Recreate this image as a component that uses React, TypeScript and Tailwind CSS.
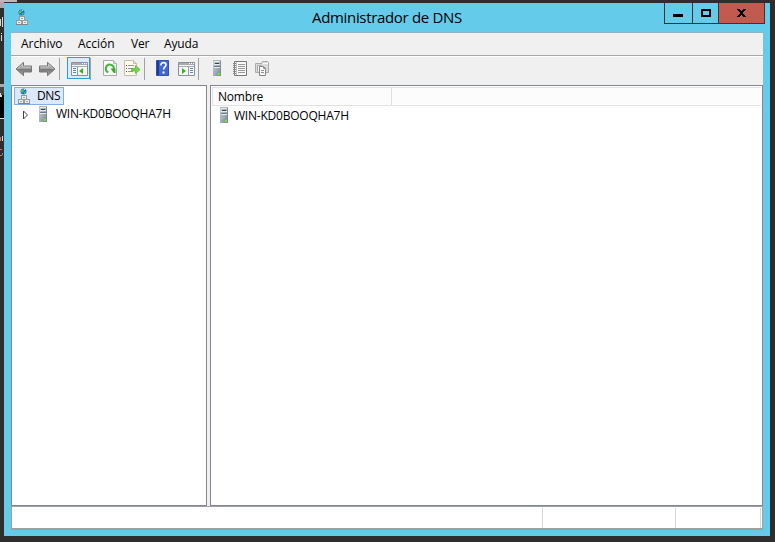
import React from 'react';

function DnsIcon() {
  return (
    <svg width="14" height="17" viewBox="0 0 14 17" shapeRendering="geometricPrecision">
      <circle cx="6.5" cy="3.5" r="3" fill="#2878bd" />
      <path d="M4 2.5 6 1l1 1-1 2-2 .5zM7 4l2 .5L7.500 6.300z" fill="#56c94c" />
      <path d="M7 1h1v1H7z" fill="#bdeef5" />
      <g fill="#eceeee" stroke="#959b9d">
        <rect x="4.500" y="7.500" width="5" height="4" />
        <rect x="1.500" y="11.500" width="5" height="4" />
        <rect x="7.500" y="11.500" width="5" height="4" />
      </g>
      <path d="M6 9h2v1H6zM3 13h2v1H3zM9 13h2v1H9z" fill="#9ca2a4" />
      <path d="M1 15.500h12" stroke="#7f8688" />
    </svg>
  );
}

function ServerIcon() {
  return (
    <svg width="10" height="16" viewBox="0 0 10 16">
      <defs>
        <linearGradient id="tower" x2="1" y2="1">
          <stop stopColor="#c9d2d5" />
          <stop offset=".5" stopColor="#a4b0b6" />
          <stop offset="1" stopColor="#758690" />
        </linearGradient>
      </defs>
      <path d="M1 0h8v16H1z" fill="url(#tower)" />
      <path d="M1 0h7v1H1z" fill="#a9b4b9" />
      <path d="M2 1h6v1H2zM2 4h6v1H2zM2 7h6v1H2z" fill="#e7edef" />
      <path d="M3 3h4v1H3z" fill="#34434b" />
      <path d="M2 6h6v1H2z" fill="#687a84" />
      <path d="M8 1h1v15H8z" fill="#7d8c95" />
      <path d="M6 13h2v2H6z" fill="#65ef20" />
    </svg>
  );
}

function Arrow({ right = false }: { right?: boolean }) {
  return (
    <svg width="18" height="16" viewBox="0 0 18 16" className={right ? '-scale-x-100' : ''}>
      <defs>
        <linearGradient id="arrow" x2="0" y2="1">
          <stop stopColor="#bbb" />
          <stop offset=".48" stopColor="#a0a0a0" />
          <stop offset=".5" stopColor="#777" />
          <stop offset="1" stopColor="#a5a5a5" />
        </linearGradient>
      </defs>
      <path d="M1 8 8.500 1.300V5H16.500v6H8.500v3.700z" fill="url(#arrow)" stroke="#777" strokeLinejoin="round" />
      <path d="M2.500 8 7.500 3.500V6h8" fill="none" stroke="#ccc" strokeWidth=".8" />
    </svg>
  );
}

function ConsoleIcon({ actions = false }: { actions?: boolean }) {
  return (
    <svg width="17" height="14" viewBox="0 0 17 14">
      <path d="M.5.5h16v13H.5z" fill="#f7f7f7" stroke="#8b9196" />
      <path d="M1 1h15v2H1z" fill="#a3abb0" />
      <path d="M11 1h1v1h-1zM13 1h1v1h-1zM15 1h1v1h-1z" fill="#fff" />
      <path d="M1 4.500h15" stroke="#a5acb0" />
      {actions ? (
        <>
          <path d="M10.500 5v8" stroke="#949a9f" />
          <path d="M12 6.500h3M12 8.500h3M12 10.500h3" stroke="#5389ba" />
          <path d="M4 6l4 3-4 3z" fill="#37b51c" />
        </>
      ) : (
        <>
          <path d="M6.500 5v8" stroke="#949a9f" />
          <path d="M2 6.500h3M2 8.500h3M2 10.500h3" stroke="#5389ba" />
          <path d="M12 6v6L8 9z" fill="#37b51c" />
        </>
      )}
    </svg>
  );
}

function RefreshIcon() {
  return (
    <svg width="14" height="16" viewBox="0 0 14 16">
      <path d="M.5.5h10l3 3v12H.5z" fill="#fafafa" stroke="#aaa" />
      <path d="M10.500.5v3h3" fill="#ddd" stroke="#b8b8b8" />
      <path d="M5.300 12.300A4 4 0 1 1 10.800 9" fill="none" stroke="#43b83a" strokeWidth="2.100" />
      <path d="M7.500 8.500H12.500v4.500H11L9.800 11.700z" fill="#38aa2e" />
    </svg>
  );
}

function ExportIcon() {
  return (
    <svg width="17" height="16" viewBox="0 0 17 16">
      <path d="M.5.5h9l3 3v12H.5z" fill="#fffbe8" stroke="#c1beb4" />
      <path d="M9.500.5v3h3" fill="#ded9c9" stroke="#c1beb4" />
      <path d="M2 5h1v1H2zM2 8h1v1H2zM2 11h1v1H2z" fill="#555" />
      <path d="M4 5.500h6M4 8.500h5M4 11.500h5" stroke="#9594ae" />
      <path d="M7.500 8.500h4v-3L16 9.500l-4.500 4v-2.500h-4z" fill="#73d34e" stroke="#55b83a" strokeWidth=".8" />
    </svg>
  );
}

function HelpIcon() {
  return (
    <svg width="14" height="16" viewBox="0 0 14 16">
      <path d="M.5.5h12v15H.5z" fill="#4268cc" stroke="#3553ad" />
      <path d="M1 1h2v14H1z" fill="#183b9e" />
      <path d="M5 5.500V4.500C5 2 10 2 10 4.800c0 2-2.200 2.100-2.500 4.700" fill="none" stroke="#fff" strokeWidth="1.600" />
      <path d="M6.500 11.500h2v2h-2z" fill="#fff" />
    </svg>
  );
}

function NotebookIcon() {
  return (
    <svg width="14" height="16" viewBox="0 0 14 16">
      <path d="M1.500.5h12v14h-12z" fill="#f8f8f8" stroke="#777" />
      <path d="M3.500 1v13" stroke="#bbb" />
      <path d="M5 3.500h7M5 5.500h7M5 7.500h7M5 9.500h7M5 11.500h7" stroke="#999" />
      <path d="M0 2.500h3M0 4.500h3M0 6.500h3M0 8.500h3M0 10.500h3M0 12.500h3" stroke="#888" />
    </svg>
  );
}

function CopyIcon() {
  return (
    <svg width="15" height="16" viewBox="0 0 15 16">
      <path d="M.5 2.500h6l1-2h5l1 1v10H.5z" fill="#dadada" stroke="#aaa" />
      <path d="M8 2h5v1H8z" fill="#fff" />
      <path d="M2.500 4.500h4v7h-4z" fill="#f2f2f2" stroke="#aaa" />
      <path d="M4.500 5.500h4l2 2v7h-6z" fill="#fafafa" stroke="#858585" />
      <path d="M8.500 5.500v2h2M6 9.500h3M6 11.500h3" fill="none" stroke="#909090" />
    </svg>
  );
}

function Separator({ className }: { className: string }) {
  return <div className={`h-[22px] w-px shrink-0 bg-[#a0a0a0] ${className}`} />;
}

function DesktopEdge() {
  return (
    <svg width="20" height="170" viewBox="0 0 20 170" className="absolute left-0 top-0" shapeRendering="crispEdges">
      <path d="M0 0h17v2H0z" fill="#b9b9b9" />
      <path d="M0 2h4v6H0z" fill="#aaa" />
      <path d="M0 19h1v7H0zM2 17h1v10H2zM1 33h1v1H1zM1 35h1v6H1z" fill="#d8d8d8" />
      <path d="M0 84h4v3H0z" fill="#aaa" />
      <path d="M0 87h4v8H0z" fill="#444" />
      <path d="M0 95h4v23H0z" fill="#000" />
      <path d="M0 93h1v2h1v2H0zM0 118h4v1H0z" fill="#ddd" />
      <path d="M0 137h1v4H0zM0 149h2v1H0zM0 155h2v1H0z" fill="#d2794c" />
      <path d="M2 136h1v5H2z" fill="#bceafa" />
      <path d="M2 153h1v2H2z" fill="#4387d7" />
    </svg>
  );
}

export default function App() {
  return (
    <main className="relative h-[542px] w-[775px] overflow-hidden bg-[#2e2e2e] pl-1 pt-[3px] font-['Open_Sans','Noto_Sans',sans-serif] text-xs leading-4 text-black">
      <DesktopEdge />
      <section className="relative flex h-[533px] w-[766px] flex-col bg-[#65cbea] px-[7px] pb-[6px]">
        <header className="flex h-[29px] shrink-0 items-start">
          <div className="ml-[4px] mt-[6px] w-[297px]"><DnsIcon /></div>
          <h1 className="mt-[4px] w-[340px] whitespace-nowrap text-[15px] leading-5 tracking-[-0.33px]">Administrador de DNS</h1>
          <div className="-mr-[2px] ml-auto flex h-[21px] w-[101px] shrink-0 border-x border-b border-[#353535]">
            <button aria-label="Minimizar" className="flex w-[28px] items-center justify-center border-r border-[#353535]"><span className="-ml-[2px] mt-[4px] h-[3px] w-[10px] bg-black" /></button>
            <button aria-label="Maximizar" className="flex w-[26px] items-center justify-center border-r border-[#353535]"><span className="h-2 w-[10px] border-2 border-black" /></button>
            <button aria-label="Cerrar" className="flex flex-1 items-center justify-center bg-[#c35a50]">
              <svg width="9" height="8" viewBox="0 0 9 8" shapeRendering="crispEdges"><path d="M0 0h3v1h1v1h1V1h1V0h3v1H8v1H7v1H6v2h1v1h1v1h1v1H6V7H5V6H4v1H3v1H0V7h1V6h1V5h1V3H2V2H1V1H0z" /></svg>
            </button>
          </div>
        </header>
        <div className="flex min-h-0 flex-1 flex-col bg-[#f0f0f0]">
          <nav className="flex h-[24px] shrink-0 border-b border-t border-b-[#a7a7a7] border-t-[#8eb4c5] pl-[10px] pt-[3px]">
            <span className="w-[57px] tracking-[-0.05px]">Archivo</span>
            <span className="w-[53px]">Acción</span>
            <span className="w-[33px] tracking-[-0.2px]">Ver</span>
            <span className="tracking-[-0.15px]">Ayuda</span>
          </nav>
          <div className="flex h-[29px] shrink-0 items-start border-t border-white pl-[4px]">
            <div className="mt-[4px]"><Arrow /></div>
            <div className="ml-[5px] mt-[4px]"><Arrow right /></div>
            <Separator className="ml-[3px] mt-[1px]" />
            <div className="ml-[7px] flex h-[22px] w-[23px] items-center justify-center border border-[#2f9bd5] bg-[#dcecf7] pl-px pt-px"><ConsoleIcon /></div>
            <Separator className="mt-[1px]" />
            <div className="ml-[12px] mt-[3px]"><RefreshIcon /></div>
            <div className="ml-[7px] mt-[3px]"><ExportIcon /></div>
            <Separator className="ml-[3px] mt-[1px]" />
            <div className="ml-[11px] mt-[3px]"><HelpIcon /></div>
            <div className="ml-[8px] mt-[5px]"><ConsoleIcon actions /></div>
            <Separator className="ml-[3px] mt-[1px]" />
            <div className="ml-[13px] mt-[3px]"><ServerIcon /></div>
            <div className="ml-[11px] mt-[4px]"><NotebookIcon /></div>
            <div className="ml-[8px] mt-[4px]"><CopyIcon /></div>
          </div>
          <div className="flex h-[421px] shrink-0 gap-[3px]">
            <aside className="w-[196px] border border-[#828790] bg-white pl-[2px] pt-px">
              <div className="flex h-[18px] w-[50px] items-start border border-[#84acdd] bg-[#dce9fa] pl-[2px]">
                <DnsIcon />
                <span className="ml-[6px] tracking-[-0.4px]">DNS</span>
              </div>
              <div className="flex h-[18px] items-start pl-[8px] pt-px">
                <svg width="7" height="10" viewBox="0 0 7 10" className="ml-px mt-[4px]"><path d="M.5 1v8l4-4z" fill="white" stroke="#444" /></svg>
                <div className="ml-[8px]"><ServerIcon /></div>
                <span className="ml-[8px] whitespace-nowrap tracking-[-0.22px]">WIN-KD0BOOQHA7H</span>
              </div>
            </aside>
            <div className="min-w-0 flex-1 border border-[#828790] bg-white px-px pt-px">
              <div className="h-[19px] border-b border-l border-t border-[#e2e2e2] bg-[#fcfcfc]">
                <div className="h-full w-[179px] border-r border-[#dedede] pl-[5px] pt-px tracking-[-0.2px]">Nombre</div>
              </div>
              <div className="flex items-start pl-[7px] pt-px">
                <ServerIcon />
                <span className="ml-[5px] mt-px whitespace-nowrap tracking-[-0.22px]">WIN-KD0BOOQHA7H</span>
              </div>
            </div>
          </div>
          <footer className="flex min-h-0 flex-1 border border-b-2 border-[#a0a0a0] bg-white pt-px">
            <div className="w-[531px] border-r border-[#d7d7d7]" />
            <div className="w-[133px] border-r border-[#d7d7d7]" />
            <div className="w-[85px] border-r border-[#d7d7d7]" />
          </footer>
        </div>
      </section>
    </main>
  );
}
